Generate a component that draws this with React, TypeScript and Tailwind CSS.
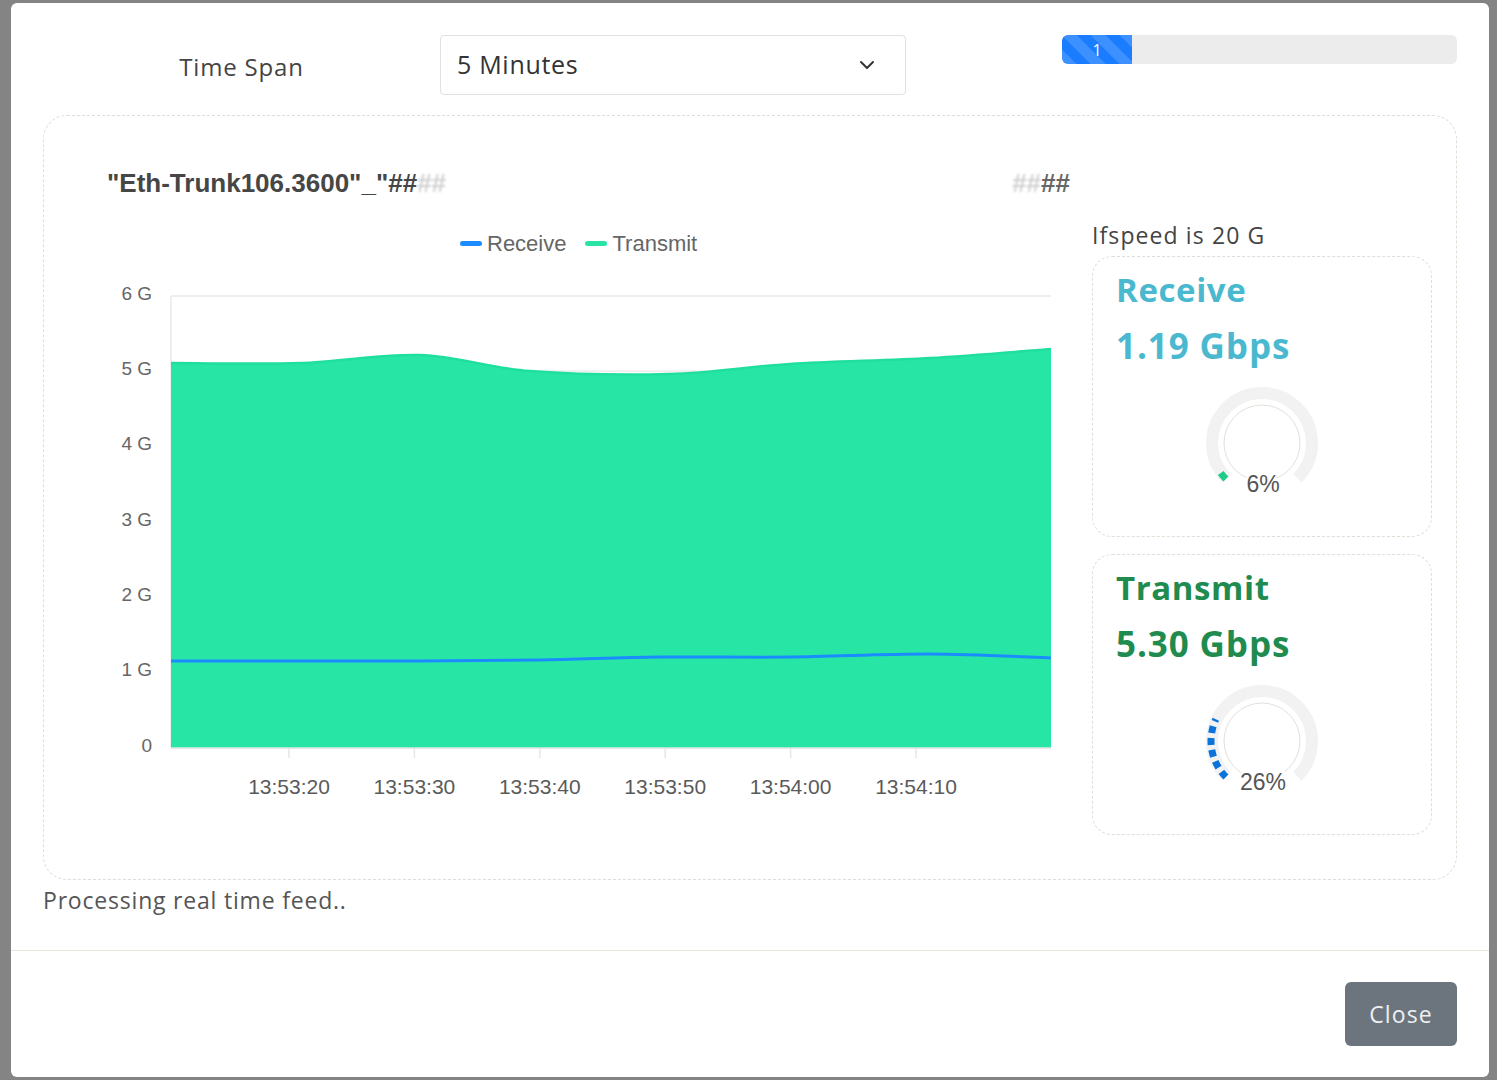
import React from 'react';
import { ChevronDown } from 'lucide-react';

type Pt = [number, number];

const smooth = (pts: Pt[]) => {
  let d = `M${pts[0][0]},${pts[0][1]}`;
  for (let i = 0; i < pts.length - 1; i++) {
    const p0 = pts[i - 1] || pts[i];
    const p1 = pts[i];
    const p2 = pts[i + 1];
    const p3 = pts[i + 2] || p2;
    const c1x = p1[0] + (p2[0] - p0[0]) / 6;
    const c1y = p1[1] + (p2[1] - p0[1]) / 6;
    const c2x = p2[0] - (p3[0] - p1[0]) / 6;
    const c2y = p2[1] - (p3[1] - p1[1]) / 6;
    d += ` C${c1x},${c1y} ${c2x},${c2y} ${p2[0]},${p2[1]}`;
  }
  return d;
};

const transmitPts: Pt[] = [
  [127, 108], [256, 108], [376, 100], [486, 116], [626, 119], [746, 109], [886, 103], [1007, 94],
];
const receivePts: Pt[] = [
  [127, 406], [256, 406], [376, 406], [496, 405], [616, 402], [746, 402], [886, 399], [1007, 403],
];

const yLabels = ['0', '1 G', '2 G', '3 G', '4 G', '5 G', '6 G'];
const xLabels = ['13:53:20', '13:53:30', '13:53:40', '13:53:50', '13:54:00', '13:54:10'];

const TrafficChart = () => {
  const top = 41;
  const bottom = 493;
  const left = 127;
  const right = 1007;
  const step = (bottom - top) / 6;
  const line = smooth(transmitPts);
  const area = `${line} L${right},${bottom} L${left},${bottom} Z`;

  return (
    <svg width="1048" height="560" className="block" style={{ fontFamily: '"Liberation Sans", Arial, sans-serif' }}>
      {yLabels.map((l, i) => (
        <g key={l}>
          <line x1={left} x2={right} y1={bottom - i * step} y2={bottom - i * step} stroke="#eeeeee" strokeWidth="2" />
          <text x="108" y={bottom - i * step - 3} textAnchor="end" dominantBaseline="central" fontSize="19" fill="#666">
            {l}
          </text>
        </g>
      ))}
      <line x1={left} x2={left} y1={top} y2={bottom} stroke="#eeeeee" strokeWidth="2" />
      <path d={area} fill="#27e6a5" />
      <path d={line} fill="none" stroke="#1fdf9c" strokeWidth="2.5" />
      <path d={smooth(receivePts)} fill="none" stroke="#1a8cff" strokeWidth="3" />
      <line x1={left} x2={right} y1={bottom} y2={bottom} stroke="#e6e6e6" strokeWidth="1.5" />
      {xLabels.map((l, i) => {
        const x = 245 + i * 125.4;
        return (
          <g key={l}>
            <line x1={x} x2={x} y1={bottom} y2={bottom + 10} stroke="#e6e6e6" strokeWidth="1.5" />
            <text x={x} y="531" textAnchor="middle" dominantBaseline="central" fontSize="21" fill="#5a5a5a">
              {l}
            </text>
          </g>
        );
      })}
    </svg>
  );
};

const polar = (deg: number, r: number): Pt => {
  const rad = (deg * Math.PI) / 180;
  return [70 + r * Math.cos(rad), 70 - r * Math.sin(rad)];
};

const Gauge = ({ percent, color, dash }: { percent: number; color: string; dash: string }) => {
  const [sx, sy] = polar(225, 50);
  const [ex, ey] = polar(-45, 50);
  const end = 225 - (percent / 100) * 270;
  const [px, py] = polar(225, 51);
  const [qx, qy] = polar(end, 51);
  return (
    <svg width="140" height="140" className="block mx-auto">
      <path d={`M${sx},${sy} A50,50 0 1 1 ${ex},${ey}`} fill="none" stroke="#f2f2f2" strokeWidth="12" />
      <circle cx="70" cy="70" r="38" fill="none" stroke="#e4e0da" strokeWidth="1" />
      <path
        d={`M${px},${py} A51,51 0 0 1 ${qx},${qy}`}
        fill="none"
        stroke={color}
        strokeWidth="7"
        strokeDasharray={dash}
      />
      <text
        x="71"
        y="111"
        textAnchor="middle"
        dominantBaseline="central"
        fontSize="23"
        fill="#555"
        stroke="#fff"
        strokeWidth="4"
        paintOrder="stroke"
        style={{ fontFamily: '"Liberation Sans", Arial, sans-serif' }}
      >
        {percent}%
      </text>
    </svg>
  );
};

const RateCard = ({ title, value, percent, textColor, gaugeColor, dash }: {
  title: string; value: string; percent: number; textColor: string; gaugeColor: string; dash: string;
}) => (
  <div className="w-[340px] h-[281px] border border-dashed border-[#e2ddd5] rounded-[20px] pt-[13px]">
    <div className={`pl-[23px] text-[33px] leading-[40px] tracking-[0.6px] font-bold ${textColor}`}>{title}</div>
    <div className={`pl-[23px] mt-[14px] text-[35px] leading-[44px] tracking-[0.9px] font-bold ${textColor}`}>{value}</div>
    <div className="mt-[5px]">
      <Gauge percent={percent} color={gaugeColor} dash={dash} />
    </div>
  </div>
);

export default function App() {
  return (
    <div className="min-h-screen w-full bg-[#848484] pl-[11px] pt-[3px] overflow-hidden" style={{ fontFamily: '"Open Sans", "Noto Sans", sans-serif' }}>
      <div className="w-[1478px] h-[1074px] bg-white rounded-[6px] flex flex-col">
        <div className="px-[32px] pt-[32px] flex-1">
          <div className="flex items-start">
            <div className="w-[397px] h-[60px] flex items-center justify-center pt-1 text-[24px] tracking-[0.8px] text-[#444]">
              Time Span
            </div>
            <div className="w-[466px] h-[60px] border border-[#e3e1dd] rounded-[4px] pl-[16px] pr-[26px] flex items-center justify-between text-[25px] tracking-[0.7px] text-[#333]">
              <span>5 Minutes</span>
              <ChevronDown size={24} strokeWidth={2} className="text-[#333]" />
            </div>
            <div className="ml-auto w-[395px] h-[29px] rounded-[6px] bg-[#ececec] overflow-hidden flex">
              <div className="w-[70px] h-full bg-[#1a7cff] bg-[linear-gradient(45deg,rgba(255,255,255,.15)_25%,transparent_25%,transparent_50%,rgba(255,255,255,.15)_50%,rgba(255,255,255,.15)_75%,transparent_75%,transparent)] bg-[length:29px_29px] flex items-center justify-center text-white text-[16px]">
                1
              </div>
            </div>
          </div>

          <div className="mt-[20px] h-[765px] border border-dashed border-[#e2ddd5] rounded-[24px] flex">
            <div className="w-[1048px] flex flex-col pt-[53px]">
              <div className="pl-[63px] pr-[22px] flex items-center h-[28px] text-[26px] font-bold text-[#464646]" style={{ fontFamily: '"Liberation Sans", Arial, sans-serif' }}>
                <span>"Eth-Trunk106.3600"_"##</span>
                <span className="text-[#d0d0d0] blur-[1px]">##</span>
                <span className="flex-1" />
                <span className="text-[#d0d0d0] blur-[1px]">##</span>
                <span className="text-[#666]">##</span>
              </div>
              <div className="mt-[34px] pl-[416px] h-[24px] flex items-center text-[22px] text-[#666]" style={{ fontFamily: '"Liberation Sans", Arial, sans-serif' }}>
                <span className="w-[22px] h-[5px] rounded-full bg-[#1a8cff] mr-[5px]" />
                <span>Receive</span>
                <span className="w-[22px] h-[5px] rounded-full bg-[#27e6a5] ml-[19px] mr-[5px]" />
                <span>Transmit</span>
              </div>
              <TrafficChart />
            </div>
            <div className="pt-[105px]">
              <div className="h-[28px] leading-[28px] text-[23px] tracking-[1.1px] text-[#444]">Ifspeed is 20 G</div>
              <div className="mt-[7px] flex flex-col gap-[17px]">
                <RateCard title="Receive" value="1.19 Gbps" percent={6} textColor="text-[#4ab9cf]" gaugeColor="#1ccc88" dash="8 9" />
                <RateCard title="Transmit" value="5.30 Gbps" percent={26} textColor="text-[#1f8b4f]" gaugeColor="#0a74da" dash="7 5" />
              </div>
            </div>
          </div>

          <div className="mt-[5px] text-[23px] leading-[30px] tracking-[0.8px] text-[#555]">Processing real time feed..</div>
        </div>

        <div className="border-t border-[#e8e4de] h-[127px] flex items-center justify-end pr-[32px]">
          <button className="w-[112px] h-[64px] rounded-[6px] bg-[#6c757d] text-[#eef0f2] text-[23px] tracking-[1.1px]">Close</button>
        </div>
      </div>
    </div>
  );
}
